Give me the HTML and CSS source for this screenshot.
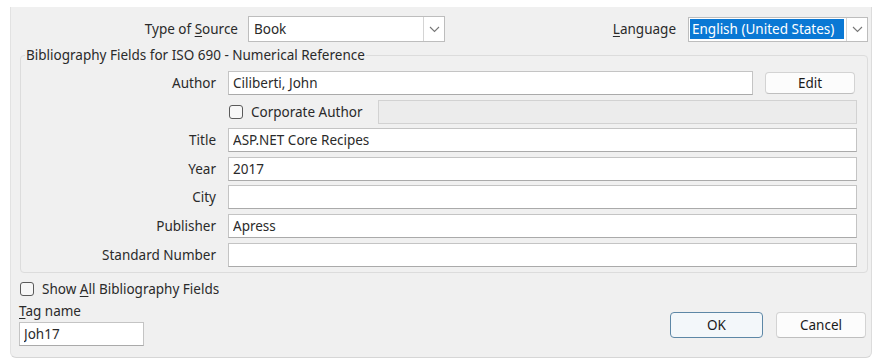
FILE: index.html
```html
<!DOCTYPE html>
<html>
<head>
    <title>Create Source</title>
    <link rel="stylesheet" href="styles.css">
</head>
<body>

<div class="dialog">
    <div class="top-row">
        <label class="source-label" for="source_type">Type of <u>S</u>ource</label>
        <div class="combo source-combo">
            <span class="combo-text">Book</span>
            <span class="combo-arrow"><svg width="11" height="7" viewBox="0 0 11 7"><path d="M1 1 L5.5 5.5 L10 1" fill="none" stroke="#777" stroke-width="1.1"/></svg></span>
        </div>
        <div class="spacer"></div>
        <label class="lang-label"><u>L</u>anguage</label>
        <div class="combo lang-combo">
            <span class="combo-text"><span class="selected">English (United States)</span></span>
            <span class="combo-arrow"><svg width="11" height="7" viewBox="0 0 11 7"><path d="M1 1 L5.5 5.5 L10 1" fill="none" stroke="#777" stroke-width="1.1"/></svg></span>
        </div>
    </div>

    <fieldset class="group">
        <legend>Bibliography Fields for ISO 690 - Numerical Reference</legend>
        <div class="fields">
            <span class="field-label">Author</span>
            <div class="author-row">
                <input class="text-box" type="text" value="Ciliberti, John">
                <button class="btn edit-btn">Edit</button>
            </div>

            <span></span>
            <div class="corporate-row">
                <span class="check"></span>
                <span class="check-text">Corporate Author</span>
                <input class="text-box disabled" type="text" disabled>
            </div>

            <span class="field-label">Title</span>
            <input class="text-box" type="text" value="ASP.NET Core Recipes">

            <span class="field-label">Year</span>
            <input class="text-box" type="text" value="2017">

            <span class="field-label">City</span>
            <input class="text-box" type="text" value="">

            <span class="field-label">Publisher</span>
            <input class="text-box" type="text" value="Apress">

            <span class="field-label">Standard Number</span>
            <input class="text-box" type="text" value="">
        </div>
    </fieldset>

    <div class="bottom">
        <div class="bottom-left">
            <div class="show-all">
                <span class="check"></span>
                <span class="check-text">Show <u>A</u>ll Bibliography Fields</span>
            </div>
            <div class="tag-label"><u>T</u>ag name</div>
            <input class="text-box tag-box" type="text" value="Joh17">
        </div>
        <div class="buttons">
            <button class="btn ok-btn">OK</button>
            <button class="btn cancel-btn">Cancel</button>
        </div>
    </div>
</div>

</body>
</html>
```

FILE: styles.css
```css
body {
    font-family: "Noto Sans", Arial, sans-serif;
    font-size: 13.5px;
    color: #2a2a2a;
    background-color: #ffffff;
    margin: 0;
    padding: 7px 10px 0 10px;
}

u {
    text-decoration-thickness: 1px;
    text-underline-offset: 2px;
}

.dialog {
    background-color: #f0f0f0;
    height: 351px;
    box-sizing: border-box;
    border-left: 1px solid #e2e2e2;
    border-right: 1px solid #dcdcdc;
    border-bottom: 1px solid #d6d6d6;
    border-radius: 0 0 6px 6px;
    padding-top: 9px;
}

.top-row {
    display: flex;
    align-items: center;
    height: 26px;
    padding-right: 3px;
}

.source-label {
    width: 227px;
    text-align: right;
    margin-right: 10px;
}

.lang-label {
    margin-right: 12px;
}

.spacer {
    flex: 1;
}

.combo {
    display: flex;
    height: 26px;
    box-sizing: border-box;
    border: 1px solid #bdbdbd;
    background-color: #ffffff;
}

.source-combo {
    width: 197px;
}

.lang-combo {
    width: 180px;
    height: 25px;
}

.combo-text {
    flex: 1;
    display: flex;
    align-items: center;
    padding-left: 5px;
    white-space: nowrap;
    overflow: hidden;
}

.lang-combo .combo-text {
    padding-left: 1px;
}

.selected {
    background-color: #0a78d4;
    color: #ffffff;
    padding: 1px 10px 1px 2px;
}

.combo-arrow {
    width: 20px;
    flex: none;
    border-left: 1px solid #d4d4d4;
    display: flex;
    align-items: center;
    justify-content: center;
}

.group {
    margin: 6px 3px 0 9px;
    padding: 8px 10px 5px 0;
    border: 1px solid #dcdcdc;
    border-radius: 4px;
    min-width: 0;
}

.group legend {
    padding: 0 1px;
    margin-left: 4px;
    line-height: 15px;
}

.fields {
    display: grid;
    grid-template-columns: 195px 1fr;
    column-gap: 12px;
    row-gap: 4.6px;
    align-items: center;
}

.field-label {
    text-align: right;
}

.text-box {
    height: 24px;
    box-sizing: border-box;
    border: 1px solid #c4c4c4;
    border-bottom-color: #aaaaaa;
    background-color: #ffffff;
    font-family: inherit;
    font-size: 13.5px;
    color: #2a2a2a;
    padding: 0 4px;
    margin: 0;
    width: 100%;
    outline: none;
}

.author-row {
    display: flex;
    align-items: center;
}

.author-row .text-box {
    width: 525px;
}

.edit-btn {
    width: 90px;
    height: 22px;
    margin-left: 12px;
}

.corporate-row {
    display: flex;
    align-items: center;
}

.corporate-row .text-box {
    flex: 1;
    margin-left: 15px;
}

.text-box.disabled {
    background-color: #ececec;
    border-color: #d2d2d2;
}

.check {
    width: 12px;
    height: 12px;
    flex: none;
    border: 1px solid #5a5a5a;
    border-radius: 3px;
    background-color: #f7f7f7;
    margin-left: 1px;
    margin-right: 8px;
}

.btn {
    font-family: inherit;
    font-size: 13.5px;
    color: #1a1a1a;
    background-color: #fcfcfc;
    border: 1px solid #d3d3d3;
    border-bottom-color: #bfbfbf;
    border-radius: 4px;
    padding: 0;
}

.bottom {
    display: flex;
    justify-content: space-between;
    align-items: flex-start;
    padding: 0 5px 0 8px;
}

.show-all {
    display: flex;
    align-items: center;
    margin-top: 7px;
    height: 18px;
}

.tag-label {
    margin-top: 4px;
    line-height: 18px;
}

.tag-box {
    width: 125px;
    margin-top: 2px;
}

.buttons {
    display: flex;
    gap: 13px;
    margin-top: 39px;
}

.ok-btn {
    width: 93px;
    height: 26px;
    background-color: #f3f7fa;
    border: 1.5px solid #5d87a6;
}

.cancel-btn {
    width: 90px;
    height: 26px;
}
```
